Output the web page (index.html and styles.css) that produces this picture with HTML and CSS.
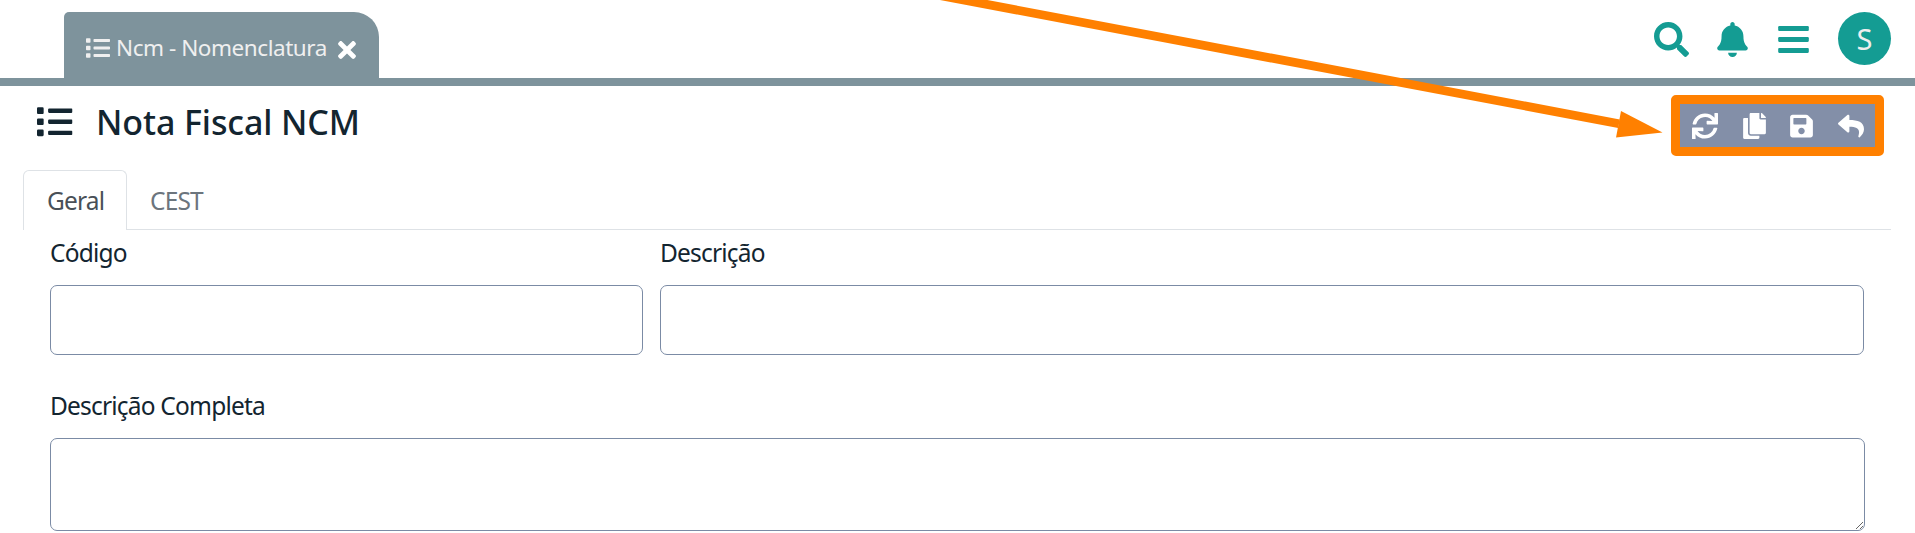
FILE: index.html
```html
<!DOCTYPE html>
<html lang="pt-BR">
<head>
<meta charset="utf-8">
<title>Nota Fiscal NCM</title>
<link rel="stylesheet" href="styles.css">
</head>
<body>
<svg class="defs" width="0" height="0">
  <symbol id="list" viewBox="0 0 512 512"><path d="M80 368H16a16 16 0 0 0-16 16v64a16 16 0 0 0 16 16h64a16 16 0 0 0 16-16v-64a16 16 0 0 0-16-16zm0-320H16A16 16 0 0 0 0 64v64a16 16 0 0 0 16 16h64a16 16 0 0 0 16-16V64a16 16 0 0 0-16-16zm0 160H16a16 16 0 0 0-16 16v64a16 16 0 0 0 16 16h64a16 16 0 0 0 16-16v-64a16 16 0 0 0-16-16zm416 176H176a16 16 0 0 0-16 16v32a16 16 0 0 0 16 16h320a16 16 0 0 0 16-16v-32a16 16 0 0 0-16-16zm0-320H176a16 16 0 0 0-16 16v32a16 16 0 0 0 16 16h320a16 16 0 0 0 16-16V80a16 16 0 0 0-16-16zm0 160H176a16 16 0 0 0-16 16v32a16 16 0 0 0 16 16h320a16 16 0 0 0 16-16v-32a16 16 0 0 0-16-16z"/></symbol>
</svg>

<header class="topbar">
  <div class="page-tab">
    <svg class="page-tab-icon"><use href="#list"/></svg>
    <span class="page-tab-text">Ncm - Nomenclatura</span>
    <svg class="page-tab-close" viewBox="0 0 352 512"><path d="M242.72 256l100.07-100.07c12.28-12.28 12.28-32.19 0-44.48l-22.24-22.24c-12.28-12.28-32.19-12.28-44.48 0L176 189.28 75.93 89.21c-12.28-12.28-32.19-12.28-44.48 0L9.21 111.45c-12.28 12.28-12.28 32.19 0 44.48L109.28 256 9.21 356.07c-12.28 12.28-12.28 32.19 0 44.48l22.24 22.24c12.28 12.28 32.2 12.28 44.48 0L176 322.72l100.07 100.07c12.28 12.28 32.2 12.28 44.48 0l22.24-22.24c12.28-12.28 12.28-32.19 0-44.48L242.72 256z"/></svg>
  </div>
  <nav class="top-actions">
    <svg class="icon-search" viewBox="0 0 512 512"><path d="M505 442.7L405.3 343c-4.5-4.5-10.6-7-17-7H372c27.6-35.3 44-79.7 44-128C416 93.1 322.9 0 208 0S0 93.1 0 208s93.1 208 208 208c48.3 0 92.7-16.4 128-44v16.3c0 6.4 2.5 12.5 7 17l99.7 99.7c9.4 9.4 24.6 9.4 33.9 0l28.3-28.3c9.4-9.4 9.4-24.6.1-34zM208 336c-70.7 0-128-57.2-128-128 0-70.7 57.2-128 128-128 70.7 0 128 57.2 128 128 0 70.7-57.2 128-128 128z"/></svg>
    <svg class="icon-narrow" viewBox="0 0 448 512"><path d="M224 512c35.32 0 63.97-28.65 63.97-64H160.03c0 35.35 28.65 64 63.97 64zm215.39-149.71c-19.32-20.76-55.47-51.99-55.47-154.29 0-77.7-54.48-139.9-127.94-155.16V32c0-17.67-14.32-32-31.98-32s-31.98 14.33-31.98 32v20.84C118.56 68.1 64.08 130.3 64.08 208c0 102.3-36.15 133.53-55.47 154.29-6 6.45-8.66 14.16-8.61 21.71.11 16.4 12.98 32 32.1 32h383.8c19.12 0 32-15.6 32.1-32 .05-7.55-2.61-15.27-8.61-21.71z"/></svg>
    <svg class="icon-narrow" viewBox="0 0 448 512"><rect y="60" width="448" height="72" rx="16"/><rect y="220" width="448" height="72" rx="16"/><rect y="380" width="448" height="72" rx="16"/></svg>
    <div class="avatar">S</div>
  </nav>
</header>

<main class="content">
  <div class="heading">
    <svg class="heading-icon"><use href="#list"/></svg>
    <h1 class="heading-title">Nota Fiscal NCM</h1>
    <div class="toolbar">
      <svg class="tool tool-wide" viewBox="0 0 512 512"><path d="M440.65 12.57l4 82.77A247.16 247.16 0 0 0 255.83 8C134.73 8 33.91 94.92 12.29 209.82A12 12 0 0 0 24.09 224h49.05a12 12 0 0 0 11.67-9.26 175.91 175.91 0 0 1 317-56.94l-101.46-4.86a12 12 0 0 0-12.57 12v47.41a12 12 0 0 0 12 12H500a12 12 0 0 0 12-12V12a12 12 0 0 0-12-12h-47.37a12 12 0 0 0-11.98 12.57zM255.83 432a175.61 175.61 0 0 1-146-77.8l101.8 4.87a12 12 0 0 0 12.57-12v-47.4a12 12 0 0 0-12-12H12a12 12 0 0 0-12 12V500a12 12 0 0 0 12 12h47.35a12 12 0 0 0 12-12.6l-4.15-82.57A247.17 247.17 0 0 0 255.83 504c121.11 0 221.93-86.92 243.55-201.82a12 12 0 0 0-11.8-14.18h-49.05a12 12 0 0 0-11.67 9.26A175.86 175.86 0 0 1 255.83 432z"/></svg>
      <svg class="tool" viewBox="0 0 448 512"><path d="M320 448v40c0 13.255-10.745 24-24 24H24c-13.255 0-24-10.745-24-24V120c0-13.255 10.745-24 24-24h72v296c0 30.879 25.121 56 56 56h168zm0-344V0H152c-13.255 0-24 10.745-24 24v368c0 13.255 10.745 24 24 24h272c13.255 0 24-10.745 24-24V128H344c-13.2 0-24-10.8-24-24zm120.971-31.029L375.029 7.029A24 24 0 0 0 358.059 0H352v96h96v-6.059a24 24 0 0 0-7.029-16.97z"/></svg>
      <svg class="tool" viewBox="0 0 448 512"><path d="M433.941 129.941l-83.882-83.882A48 48 0 0 0 316.118 32H48C21.49 32 0 53.49 0 80v352c0 26.51 21.49 48 48 48h352c26.51 0 48-21.49 48-48V163.882a48 48 0 0 0-14.059-33.941zM224 416c-35.346 0-64-28.654-64-64 0-35.346 28.654-64 64-64s64 28.654 64 64c0 35.346-28.654 64-64 64zm96-304.52V212c0 6.627-5.373 12-12 12H76c-6.627 0-12-5.373-12-12V108c0-6.627 5.373-12 12-12h228.52c3.183 0 6.235 1.264 8.485 3.515l3.48 3.48A11.996 11.996 0 0 1 320 111.48z"/></svg>
      <svg class="tool tool-wide" viewBox="0 0 512 512"><path d="M8.309 189.836L184.313 37.851C199.719 24.546 224 35.347 224 56.015v80.053c160.629 1.839 288 34.032 288 186.258 0 61.441-39.581 122.309-83.333 154.132-13.653 9.931-33.111-2.533-28.077-18.631 45.344-145.012-21.507-183.51-176.59-185.742V360c0 20.7-24.3 31.453-39.687 18.164l-176.004-152c-11.071-9.562-11.086-26.753 0-36.328z"/></svg>
    </div>
  </div>

  <div class="tabs">
    <div class="tab tab-active">Geral</div>
    <div class="tab">CEST</div>
  </div>

  <form class="form">
    <div class="row">
      <label class="field"><span class="label">Código</span><input class="control" type="text"></label>
      <label class="field"><span class="label">Descrição</span><input class="control" type="text"></label>
    </div>
    <label class="field"><span class="label">Descrição Completa</span><textarea class="control control-area"></textarea></label>
  </form>
</main>

<svg class="arrow" viewBox="0 0 1915 533"><path d="M916 -9L1619 123.7"/><polygon points="1662.5,132.5 1621,111 1616,137.5"/></svg>
</body>
</html>
```

FILE: styles.css
```css
* { box-sizing: border-box; }
body {
  margin: 0;
  height: 533px;
  overflow: hidden;
  background: #fff;
  color: #132530;
  font-family: "Noto Sans", "Open Sans", sans-serif;
}
svg { display: block; flex: none; fill: currentColor; }
.defs { position: absolute; }

.topbar {
  display: flex;
  justify-content: space-between;
  height: 86px;
  padding: 12px 24px 0 64px;
  border-bottom: 8px solid #7e939c;
}
.page-tab {
  display: flex;
  align-items: flex-start;
  width: 315px;
  height: 66px;
  padding: 24px 0 0 22px;
  border-radius: 5px 25px 0 0;
  background: #7e939c;
  color: #efefef;
}
.page-tab-icon { width: 24px; height: 24px; }
.page-tab-text {
  width: 222px;
  margin-left: 6px;
  font-size: 22.5px;
  letter-spacing: -0.45px;
  line-height: 24px;
  white-space: nowrap;
}
.page-tab-close { width: 18px; height: 26px; margin-top: 1px; color: #fff; }
.top-actions {
  display: flex;
  align-items: flex-start;
  color: #149c93;
}
.icon-search { width: 35px; height: 35px; margin: 9.5px 28px 0 0; }
.icon-narrow { width: 31px; height: 35px; margin: 9.5px 30px 0 0; }
.icon-narrow + .icon-narrow { margin-right: 29px; }
.avatar {
  width: 53px;
  height: 53px;
  border-radius: 50%;
  background: #149c93;
  color: #eee;
  font-size: 29px;
  line-height: 54px;
  text-align: center;
}

.content { padding: 0 24px 0 23px; }
.heading {
  display: flex;
  align-items: flex-start;
  height: 84px;
  padding: 9px 7px 0 14px;
}
.heading-icon { width: 35.5px; height: 35.5px; margin-top: 9px; }
.heading-title {
  margin: 7px auto 0 23.5px;
  font-size: 34px;
  font-weight: 500;
  letter-spacing: -0.1px;
  line-height: 40px;
  white-space: nowrap;
}
.toolbar {
  display: flex;
  gap: 24.5px;
  width: 213px;
  height: 61px;
  padding: 9px 0 0 12px;
  border: 9px solid #ff8000;
  border-radius: 5px;
  background: #838fa8;
  color: #fff;
}
.tool { width: 23px; height: 26px; }
.tool-wide { width: 26px; }

.tabs {
  display: flex;
  height: 60px;
  border-bottom: 1px solid #dee2e6;
}
.tab {
  height: 60px;
  padding: 0 23px;
  color: #6c757d;
  font-size: 24.5px;
  letter-spacing: -0.85px;
  line-height: 61px;
}
.tab-active {
  width: 104px;
  border: 1px solid #dee2e6;
  border-bottom: 0;
  border-radius: 6px 6px 0 0;
  background: #fff;
  color: #495057;
  line-height: 59px;
}

.form { padding: 8px 26px 0 27px; }
.row {
  display: grid;
  grid-template-columns: 593px 1204px;
  gap: 17px;
  margin-bottom: 36px;
}
.field { display: block; }
.label {
  display: block;
  height: 47px;
  font-size: 24.5px;
  letter-spacing: -0.8px;
  line-height: 30px;
  white-space: nowrap;
}
.control {
  display: block;
  width: 100%;
  height: 70px;
  margin: 0;
  border: 1px solid #7b8ba5;
  border-radius: 7px;
  background: #fff;
  outline: 0;
}
.control-area { height: 93px; resize: vertical; }
.arrow {
  position: absolute;
  top: 0;
  left: 0;
  width: 1915px;
  height: 533px;
  pointer-events: none;
  fill: #ff8000;
}
.arrow path { stroke: #ff8000; stroke-width: 8.8; }
```
